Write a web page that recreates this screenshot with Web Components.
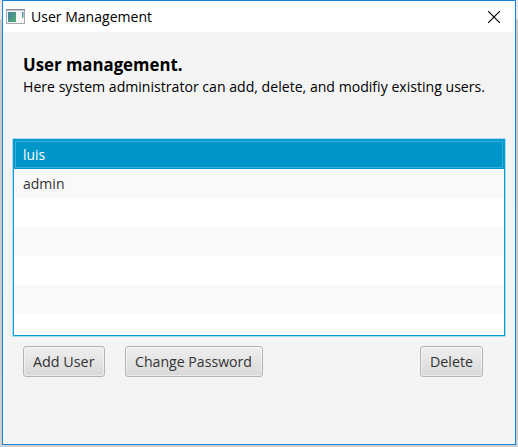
<!DOCTYPE html>
<html lang="en">
<head>
<meta charset="utf-8">
<title>User Management</title>
<style>
html, body { margin: 0; height: 100%; overflow: hidden; background: #d2d2d2; }
body { font-family: "Open Sans", "Noto Sans", sans-serif; font-size: 15px; color: #000; }
</style>
</head>
<body>
<app-window>
  <title-bar slot="title"><fit-text width="121">User Management</fit-text></title-bar>
  <page-intro>
    <fit-text slot="heading" width="159.5">User management.</fit-text>
    <fit-text width="462">Here system administrator can add, delete, and modifiy existing users.</fit-text>
  </page-intro>
  <user-list>
    <user-row selected><fit-text width="22">luis</fit-text></user-row>
    <user-row><fit-text width="41.5">admin</fit-text></user-row>
    <user-row></user-row>
    <user-row></user-row>
    <user-row></user-row>
    <user-row></user-row>
    <user-row></user-row>
  </user-list>
  <button-row>
    <push-button style="width:82px"><fit-text width="61.5">Add User</fit-text></push-button>
    <push-button style="width:138px"><fit-text width="117">Change Password</fit-text></push-button>
    <push-button slot="end" style="width:63px"><fit-text width="43">Delete</fit-text></push-button>
  </button-row>
</app-window>
<script>
const define = (name, html, ready) => customElements.define(name, class extends HTMLElement {
  constructor() {
    super();
    this.attachShadow({ mode: 'open' }).innerHTML = html;
  }
  connectedCallback() { if (ready) ready(this); }
});

define('app-window', `<style>
  :host { display: block; box-sizing: border-box; height: 447px; padding: 0 2px 2px; background: linear-gradient(#e9e9e9 0 19px, #c9c9c9 20px, #cfcfcf); }
  .frame { box-sizing: border-box; width: 514px; height: 445px; border: 1px solid #1883d7; background: #f4f4f4; display: flex; flex-direction: column; }
</style><div class="frame"><slot name="title"></slot><slot></slot></div>`);

define('title-bar', `<style>
  :host { display: flex; align-items: center; height: 31px; flex: none; background: #fff; padding-left: 3px; font-size: 14.5px; }
  .icon { flex: none; margin-right: 6px; }
  .close { margin-left: auto; margin-right: 15px; flex: none; }
</style>
<svg class="icon" width="19" height="16" viewBox="0 0 19 16">
  <defs><linearGradient id="g" x2="1" y2="1"><stop stop-color="#4b7fa0"/><stop offset="1" stop-color="#4fae72"/></linearGradient>
  <linearGradient id="h" x2="0" y2="1"><stop stop-color="#3a7bb5"/><stop offset="1" stop-color="#65bd7c"/></linearGradient></defs>
  <rect x=".5" y=".5" width="18" height="14" fill="#f4f6f7" stroke="#a4a8ad"/>
  <path d="M0 .5H19" stroke="#858b91"/><path d="M1 1.5H18" stroke="#c3c7cb"/>
  <rect x="2" y="3" width="8" height="10" fill="url(#g)"/>
  <rect x="16" y="3" width="1.5" height="6" fill="url(#h)"/>
</svg>
<slot></slot>
<svg class="close" width="12" height="12" viewBox="0 0 12 12"><path d="M0 0L12 12M12 0L0 12" stroke="#000" stroke-width="1.15"/></svg>`);

define('page-intro', `<style>
  :host { display: block; box-sizing: border-box; height: 106px; flex: none; padding: 22px 0 0 20px; }
  .heading { font-size: 17.5px; font-weight: 700; line-height: 20px; margin-bottom: 2px; }
  .body { line-height: 20px; }
</style><div class="heading"><slot name="heading"></slot></div><div class="body"><slot></slot></div>`);

define('user-list', `<style>
  :host { display: block; box-sizing: border-box; width: 494px; height: 199px; margin-left: 9px; flex: none; border: 1px solid #a5dcef; border-radius: 1px; }
  .view { box-sizing: border-box; height: 197px; overflow: hidden; border: 1px solid #039ed3; background: #fff; }
  ::slotted(:nth-child(even)) { background: #f9f9f9; }
</style><div class="view"><slot></slot></div>`);

define('user-row', `<style>
  :host { display: block; box-sizing: border-box; height: 29px; padding: 1px; color: #333; }
  .cell { box-sizing: border-box; height: 27px; padding-left: 7px; border: 1px solid transparent; line-height: 24px; }
  :host([selected]) { background: #0096c9; color: #fff; }
  :host([selected]) .cell { border-color: #30b0da; }
</style><div class="cell"><slot></slot></div>`);

define('button-row', `<style>
  :host { display: flex; gap: 20px; flex: none; margin-top: 9px; padding: 0 32px 0 20px; }
  .end { margin-left: auto; }
</style><slot></slot><div class="end"><slot name="end"></slot></div>`);

define('push-button', `<style>
  :host { display: block; box-sizing: border-box; height: 31px; border: 1px solid #b5b5b5; border-radius: 3px; background: linear-gradient(#efefef, #d9d9d9); box-shadow: inset 0 0 0 1px rgba(255,255,255,.45); padding-left: 9px; line-height: 29px; color: #333; }
</style><slot></slot>`);

/* A single line of text, condensed so that it fills the width it is given. */
define('fit-text', `<style>
  :host { display: inline-block; flex: none; white-space: nowrap; vertical-align: top; transform-origin: 0 50%; }
</style><slot></slot>`, el => {
  const natural = el.getBoundingClientRect().width;
  const width = Number(el.getAttribute('width'));
  el.style.transform = `scaleX(${(width / natural).toFixed(4)})`;
  el.style.marginRight = (width - natural).toFixed(2) + 'px';
});
</script>
</body>
</html>
